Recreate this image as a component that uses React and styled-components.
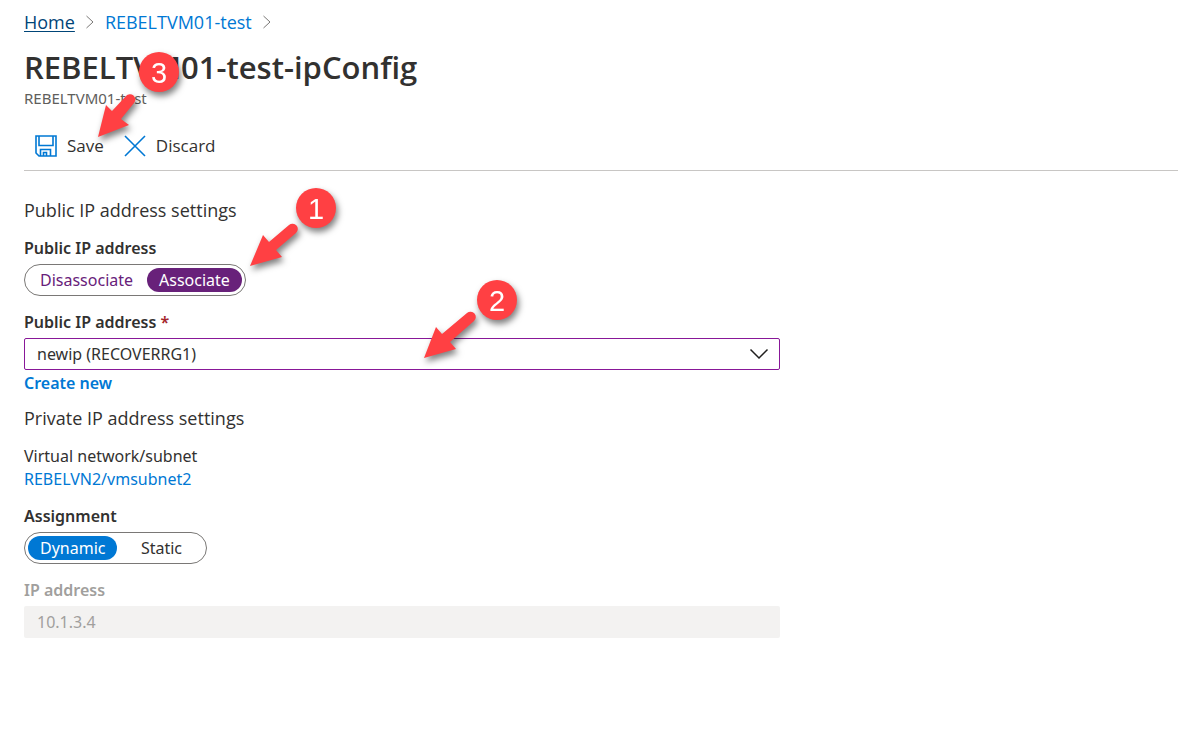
import React, { useState } from "react"
import styled, { createGlobalStyle } from "styled-components"

const App = () => {
  const [publicIp, setPublicIp] = useState("Associate")
  const [assignment, setAssignment] = useState("Dynamic")

  return (
    <Page>
      <GlobalStyle />
      <Breadcrumb aria-label="Breadcrumb">
        <Crumb href="#home" $current>
          Home
        </Crumb>
        <Separator />
        <Crumb href="#vm">REBELTVM01-test</Crumb>
        <Separator />
      </Breadcrumb>
      <Title>REBELTVM01-test-ipConfig</Title>
      <Subtitle>REBELTVM01-test</Subtitle>
      <Toolbar>
        <ToolButton type="button">
          <SaveIcon />
          Save
        </ToolButton>
        <ToolButton type="button">
          <DiscardIcon />
          Discard
        </ToolButton>
      </Toolbar>

      <Form>
        <SectionTitle>Public IP address settings</SectionTitle>
        <Field>
          <Label as="span" id="public-ip-label">
            Public IP address
          </Label>
          <Toggle
            name="public-ip"
            labelledBy="public-ip-label"
            options={["Disassociate", "Associate"]}
            value={publicIp}
            onChange={setPublicIp}
            color="#68217a"
            textColor="#68217a"
          />
        </Field>
        <Field>
          <Label htmlFor="ip-name">
            Public IP address <Required>*</Required>
          </Label>
          <SelectBox>
            <Select id="ip-name" defaultValue="newip">
              <option value="newip">newip (RECOVERRG1)</option>
            </Select>
            <Chevron viewBox="0 0 20 12" aria-hidden="true">
              <path d="M1.5 1.5 10 10l8.500-8.500" />
            </Chevron>
          </SelectBox>
          <CreateRow>
            <Link href="#create" $bold>
              Create new
            </Link>
          </CreateRow>
        </Field>

        <SectionTitle>Private IP address settings</SectionTitle>
        <Field>
          <Text>Virtual network/subnet</Text>
          <Link href="#subnet">REBELVN2/vmsubnet2</Link>
        </Field>
        <Field>
          <Label as="span" id="assignment-label">
            Assignment
          </Label>
          <Toggle
            name="assignment"
            labelledBy="assignment-label"
            options={["Dynamic", "Static"]}
            value={assignment}
            onChange={setAssignment}
            color="#0078d4"
            textColor="#323130"
          />
        </Field>
        <Field>
          <Label htmlFor="ip-address" $disabled>
            IP address
          </Label>
          <Input id="ip-address" defaultValue="10.1.3.4" disabled />
        </Field>
      </Form>

      <Callout number="3" top={52} left={98} badge={41} height={86}>
        <path d="M0 85 8 53l6 6 14-15a5 5 0 0 1 8 7L23 67l8 6Z" />
      </Callout>
      <Callout number="1" top={188} left={250} badge={46} height={80}>
        <path d="M0 78 13 47l6 7 20-17a5 5 0 0 1 7 8L26 62l6 7Z" />
      </Callout>
      <Callout number="2" top={280} left={424} badge={53} height={80}>
        <path d="M0 78 12 47l6 7 25-21a5 5 0 0 1 7 8L26 62l6 7Z" />
      </Callout>
    </Page>
  )
}

const Separator = () => (
  <SeparatorSvg viewBox="0 0 10 14" aria-hidden="true">
    <path d="M1.500 1 8 7l-6.500 6" />
  </SeparatorSvg>
)

const SaveIcon = () => (
  <ToolIcon viewBox="0 0 22 22" aria-hidden="true">
    <path d="M1 1h20v20H4l-3-3ZM4 1v9.500h14V1M5.500 21v-6.500h10V21M8.500 21v-3.500h3V21" />
  </ToolIcon>
)

const DiscardIcon = () => (
  <ToolIcon viewBox="0 0 22 22" aria-hidden="true">
    <path d="m1 1 20 20M21 1 1 21" />
  </ToolIcon>
)

const Toggle = ({ name, labelledBy, options, value, onChange, color, textColor }) => (
  <ToggleGroup role="radiogroup" aria-labelledby={labelledBy}>
    {options.map(option => (
      <ToggleOption key={option} $active={option === value} $color={color} $text={textColor}>
        <Radio
          type="radio"
          name={name}
          value={option}
          checked={option === value}
          onChange={() => onChange(option)}
        />
        {option}
      </ToggleOption>
    ))}
  </ToggleGroup>
)

const Callout = ({ number, top, left, badge, height, children }) => (
  <CalloutBox $top={top} $left={left}>
    <Arrow width={badge + 10} height={height} aria-hidden="true">
      {children}
    </Arrow>
    <Badge $left={badge}>{number}</Badge>
  </CalloutBox>
)

const GlobalStyle = createGlobalStyle`
  * {
    box-sizing: border-box;
  }

  body {
    margin: 0;
    background: #fff;
    color: #323130;
    font-family: "Noto Sans", "Open Sans", sans-serif;
    font-size: 16px;
    line-height: 24px;
  }

  h1, h2 {
    font-family: "Open Sans", "Noto Sans", sans-serif;
  }

  button, input, select {
    font: inherit;
    color: inherit;
  }
`

const Page = styled.main`
  position: relative;
  padding: 10px 0 24px 24px;
`

const Breadcrumb = styled.nav`
  display: flex;
  align-items: center;
  gap: 10px;
  font-family: "Open Sans", "Noto Sans", sans-serif;
  font-size: 18px;
`

const Crumb = styled.a`
  color: ${props => (props.$current ? "#004578" : "#0078d4")};
  text-decoration: ${props => (props.$current ? "underline" : "none")};
  text-decoration-thickness: 1px;
  text-underline-offset: 2px;
`

const SeparatorSvg = styled.svg`
  width: 10px;
  height: 14px;
  fill: none;
  stroke: #7a7876;
`

const Title = styled.h1`
  margin: 13px 0 0;
  font-size: 31px;
  font-weight: 600;
  line-height: 40px;
`

const Subtitle = styled.div`
  color: #605e5c;
  font-size: 15px;
  line-height: 22px;
`

const Toolbar = styled.div`
  display: flex;
  align-items: center;
  gap: 20px;
  margin-top: 19px;
  padding: 0 10px 6px 11px;
  border-bottom: 1px solid #c8c6c4;
`

const ToolButton = styled.button`
  display: flex;
  align-items: center;
  gap: 10px;
  height: 36px;
  padding: 0;
  border: 0;
  background: none;
  font-family: "Open Sans", "Noto Sans", sans-serif;
  font-size: 17px;
`

const ToolIcon = styled.svg`
  width: 22px;
  height: 22px;
  fill: none;
  stroke: #0078d4;
  stroke-width: 1.6;
`

const Form = styled.form`
  display: flex;
  flex-direction: column;
  max-width: 756px;
  padding-top: 15px;
`

const SectionTitle = styled.h2`
  margin: 12px 0 0;
  font-size: 18px;
  font-weight: 400;
  line-height: 24px;
`

const Field = styled.div`
  display: flex;
  flex-direction: column;
  align-items: flex-start;
  margin-top: 14px;
`

const Label = styled.label`
  margin-bottom: 4px;
  color: ${props => (props.$disabled ? "#a19f9d" : "#323130")};
  font-weight: 600;
`

const Required = styled.span`
  color: #a4262c;
`

const Text = styled.span`
  font-size: 16px;
`

const Link = styled.a`
  color: #0078d4;
  font-weight: ${props => (props.$bold ? 600 : 400)};
  line-height: 22px;
  text-decoration: none;
`

const CreateRow = styled.div`
  display: flex;
  padding-top: 2px;
`

const ToggleGroup = styled.div`
  display: flex;
  gap: 2px;
  height: 32px;
  padding: 3px;
  border: 1px solid #7a7876;
  border-radius: 16px;
`

const ToggleOption = styled.label`
  display: flex;
  align-items: center;
  justify-content: center;
  min-width: 84px;
  padding: 0 12px;
  border-radius: 12px;
  background: ${props => (props.$active ? props.$color : "transparent")};
  color: ${props => (props.$active ? "#fff" : props.$text)};
  cursor: pointer;
`

const Radio = styled.input`
  position: absolute;
  margin: 0;
  opacity: 0;
  pointer-events: none;
`

const SelectBox = styled.div`
  display: grid;
  align-items: center;
  width: 100%;
`

const Select = styled.select`
  grid-area: 1 / 1;
  width: 100%;
  height: 32px;
  padding: 0 40px 0 12px;
  border: 1px solid #881798;
  border-radius: 2px;
  background: #fff;
  appearance: none;
`

const Chevron = styled.svg`
  grid-area: 1 / 1;
  justify-self: end;
  width: 20px;
  height: 12px;
  margin-right: 11px;
  fill: none;
  stroke: #201f1e;
  stroke-width: 1.5;
  pointer-events: none;
`

const Input = styled.input`
  width: 100%;
  height: 32px;
  padding: 0 13px;
  border: 0;
  border-radius: 2px;
  background: #f3f2f1;
  color: #a19f9d;
`

const CalloutBox = styled.div`
  position: absolute;
  top: ${props => props.$top}px;
  left: ${props => props.$left}px;
  filter: drop-shadow(2px 4px 3px rgba(0, 0, 0, 0.5));
  pointer-events: none;
`

const Arrow = styled.svg`
  display: block;
  overflow: visible;
  fill: #ff4043;
`

const Badge = styled.span`
  position: absolute;
  top: 0;
  left: ${props => props.$left}px;
  width: 40px;
  height: 40px;
  border-radius: 50%;
  background: #ff4043;
  color: #fff;
  font-family: "Liberation Sans", Arial, sans-serif;
  font-size: 29px;
  line-height: 42px;
  text-align: center;
`

export default App
